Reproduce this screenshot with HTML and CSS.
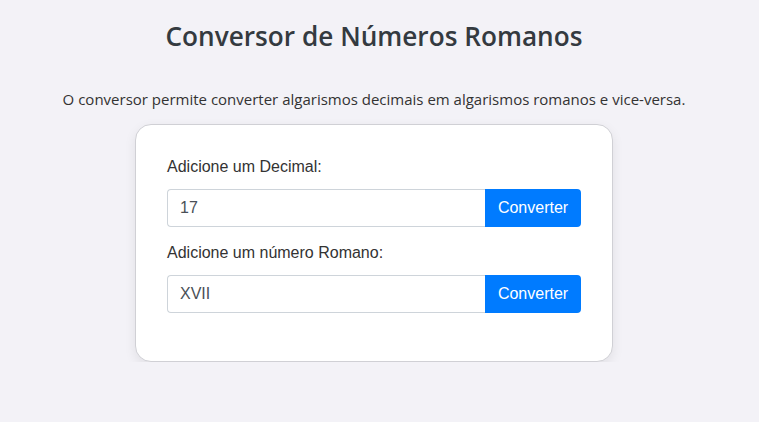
FILE: index.html
```html
<!DOCTYPE html>
<html lang="pt">
<head>
<meta charset="utf-8">
<title>Conversor de Números Romanos</title>
<link rel="stylesheet" href="styles.css">
</head>
<body>
<div class="page">
  <h1 class="title">Conversor de Números Romanos</h1>
  <p class="intro">O conversor permite converter algarismos decimais em algarismos romanos e vice-versa.</p>
  <div class="card">
    <label class="label" for="dec">Adicione um Decimal:</label>
    <div class="group">
      <input class="field" id="dec" type="text" value="17">
      <button class="btn" type="button">Converter</button>
    </div>
    <label class="label" for="rom">Adicione um número Romano:</label>
    <div class="group">
      <input class="field" id="rom" type="text" value="XVII">
      <button class="btn" type="button">Converter</button>
    </div>
  </div>
</div>
</body>
</html>
```
FILE: styles.css
```css
html, body {
  margin: 0;
  padding: 0;
  background: #f3f2f7;
}
.page {
  width: 748px;
  display: flex;
  flex-direction: column;
  align-items: center;
  font-family: "Open Sans", "Noto Sans", sans-serif;
  color: #333;
}
.title {
  margin: 18px 0 0;
  font-size: 26.2px;
  font-weight: 600;
  line-height: 36px;
  color: #343a40;
}
.intro {
  margin: 34px 0 0;
  font-size: 15px;
  line-height: 22px;
  color: #333;
}
.card {
  margin-top: 14px;
  width: 478px;
  box-sizing: border-box;
  background: #fff;
  border: 1px solid #d0d0d5;
  border-radius: 16px;
  box-shadow: 0 4px 12px rgba(0, 0, 0, 0.08);
  padding: 31px 31px 48px;
  display: flex;
  flex-direction: column;
  font-family: "Liberation Sans", Arial, sans-serif;
}
.label {
  font-size: 16px;
  line-height: 22px;
  color: #333;
  margin-bottom: 11px;
}
.group {
  display: flex;
  height: 38px;
  margin-bottom: 15px;
}
.group:last-child {
  margin-bottom: 0;
}
.field {
  flex: 1;
  min-width: 0;
  box-sizing: border-box;
  height: 38px;
  border: 1px solid #ced4da;
  border-right: none;
  border-radius: 4px 0 0 4px;
  padding: 0 12px;
  font-family: "Liberation Sans", Arial, sans-serif;
  font-size: 16px;
  color: #495057;
  background: #fff;
  outline: none;
}
.btn {
  width: 96px;
  height: 38px;
  border: none;
  border-radius: 0 4px 4px 0;
  background: #007bff;
  color: #fff;
  font-family: "Liberation Sans", Arial, sans-serif;
  font-size: 16px;
  padding: 0;
  cursor: pointer;
}
```
